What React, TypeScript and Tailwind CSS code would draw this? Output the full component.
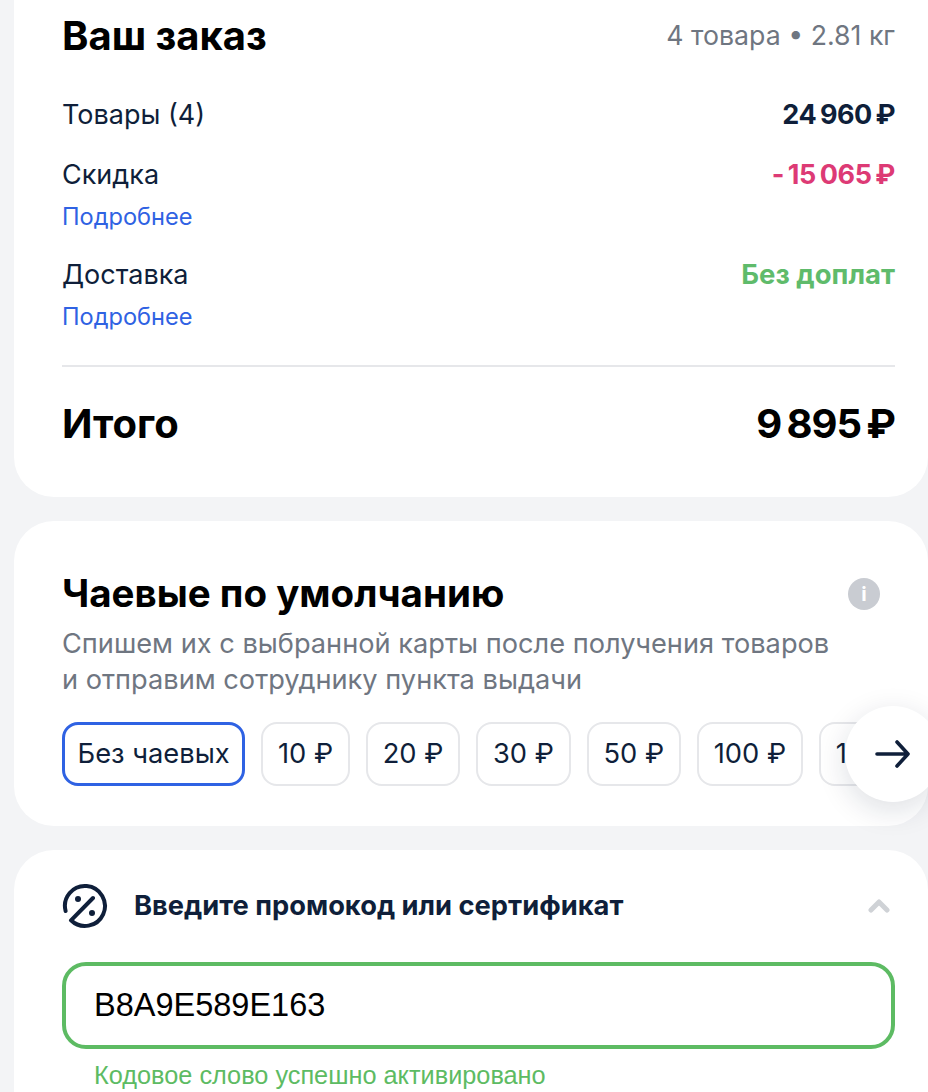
const tips = ["10 ₽", "20 ₽", "30 ₽", "50 ₽", "100 ₽", "150 ₽"];

function PromoIcon() {
  return (
    <svg width="46" height="46" viewBox="0 0 46 46" fill="none" stroke="#0f1f3a" strokeWidth="4" strokeLinecap="round" strokeLinejoin="round">
      <path d="M3.6 28A20 20 0 1 1 9 37.3L31 15" />
      <circle cx="16" cy="16" r="3" fill="#0f1f3a" stroke="none" />
      <circle cx="30" cy="30" r="3" fill="#0f1f3a" stroke="none" />
    </svg>
  );
}

function Row({ label, link, children }: { label: string; link?: boolean; children: React.ReactNode }) {
  return (
    <div>
      <div className="flex items-center justify-between h-[36px] text-[27px] text-[#0f1f3a]">
        <span>{label}</span>
        {children}
      </div>
      {link && <div className="mt-[10px] h-[30px] leading-[28px] text-[23.6px] text-[#2f62e3]">Подробнее</div>}
    </div>
  );
}

export default function App() {
  return (
    <div className="w-[928px] h-[1092px] overflow-hidden bg-[#f3f4f6] font-['Inter',sans-serif]">
      <div className="ml-[14px] w-[914px] h-[497px] bg-white rounded-b-[40px] pl-[48px] pr-[33px]">
        <div className="flex items-center justify-between pt-[12px] h-[59px]">
          <h1 className="text-[40px] font-bold text-black">Ваш заказ</h1>
          <span className="text-[26.7px] text-[#6f7681]">4 товара • 2.81 кг</span>
        </div>
        <div className="mt-[38px] flex flex-col gap-[24px]">
          <Row label="Товары (4)">
            <span className="font-bold tracking-[-0.5px] text-[#0f1f3a]">{"24\u2009960\u2009₽"}</span>
          </Row>
          <Row label="Скидка" link>
            <span className="font-bold tracking-[-0.4px] text-[#dd3a75]">{"-\u200915\u2009065\u2009₽"}</span>
          </Row>
          <Row label="Доставка" link>
            <span className="font-bold text-[27.5px] text-[#5fbb6b]">Без доплат</span>
          </Row>
        </div>
        <div className="mt-[32px] border-t-2 border-[#e6e7ea] flex items-center justify-between h-[116px] text-[40px] font-bold text-black">
          <span>Итого</span>
          <span className="tracking-[-1px]">{"9\u2009895\u2009₽"}</span>
        </div>
      </div>

      <div className="relative mt-[24px] ml-[14px] w-[914px] h-[305px] bg-white rounded-[40px] pl-[48px] pr-[33px] pt-[50px]">
        <div className="flex items-center justify-between h-[46px] pr-[15px]">
          <h2 className="text-[38.5px] font-bold text-black">Чаевые по умолчанию</h2>
          <span className="w-[32px] h-[32px] rounded-full bg-[#c9ccd2] text-white flex items-center justify-center text-[20px] font-bold">i</span>
        </div>
        <p className="mt-[9px] text-[27.2px] leading-[36px] text-[#6f7681]">
          Спишем их с выбранной карты после получения товаров
          <br />и отправим сотруднику пункта выдачи
        </p>
        <div className="mt-[24px] flex gap-[16px] overflow-hidden">
          <div className="shrink-0 h-[64px] px-[12.5px] flex items-center rounded-[16px] border-[3px] border-[#2f62e3] text-[27.3px] text-[#0f1f3a]">Без чаевых</div>
          {tips.map((t) => (
            <div key={t} className="shrink-0 h-[64px] px-[14.8px] flex items-center rounded-[16px] border-2 border-[#e6e7ea] text-[27.3px] text-[#0f1f3a]">{t}</div>
          ))}
        </div>
        <button className="absolute left-[831px] top-[185px] w-[96px] h-[96px] rounded-full bg-white shadow-[0_8px_30px_rgba(15,31,58,0.14)] flex items-center justify-center">
          <svg width="36" height="30" viewBox="0 0 36 30" fill="none" stroke="#0f1f3a" strokeWidth="3.6" strokeLinecap="round" strokeLinejoin="round">
            <path d="M2 15H33M22 3l11 12-11 12" />
          </svg>
        </button>
      </div>

      <div className="mt-[24px] ml-[14px] w-[914px] h-[300px] bg-white rounded-[40px] pl-[48px] pr-[33px] pt-[33px]">
        <div className="flex items-center h-[46px]">
          <PromoIcon />
          <span className="ml-[26px] text-[27.3px] font-bold text-[#0f1f3a]">Введите промокод или сертификат</span>
          <svg className="ml-auto mr-[5px]" width="22" height="14" viewBox="0 0 22 14" fill="none" stroke="#cfd2d6" strokeWidth="5" strokeLinecap="round" strokeLinejoin="round">
            <path d="M3 11l8-8 8 8" />
          </svg>
        </div>
        <div className="mt-[33px] h-[87px] rounded-[24px] border-[4px] border-[#5dbb63] flex items-center pl-[28px] text-[32.5px] font-['Liberation_Sans',sans-serif] text-black">B8A9E589E163</div>
        <div className="mt-[8px] pl-[32px] text-[25.3px] font-['Liberation_Sans',sans-serif] text-[#5dbb63]">Кодовое слово успешно активировано</div>
      </div>
    </div>
  );
}
